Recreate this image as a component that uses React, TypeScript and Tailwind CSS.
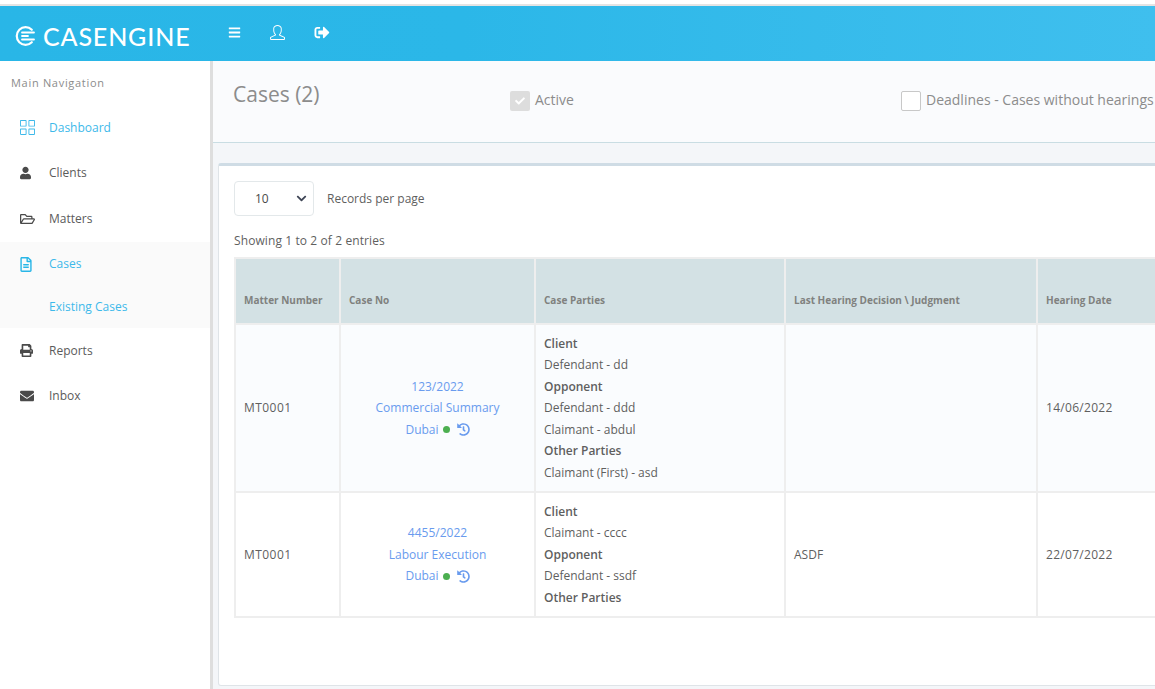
import { FaBars, FaCheck, FaChevronDown, FaEnvelope, FaHistory, FaPrint, FaRegFileAlt, FaRegFolderOpen, FaSignOutAlt, FaUser } from "react-icons/fa";
import { SlGrid, SlUser } from "react-icons/sl";
import type { ReactNode } from "react";

const nav = [
  { label: "Dashboard", icon: <SlGrid className="h-[15px] w-[15px]" />, active: true },
  { label: "Clients", icon: <FaUser className="h-[14px] w-[11px] text-[#4a4a4a]" /> },
  { label: "Matters", icon: <FaRegFolderOpen className="h-[14px] w-[15px] text-[#4a4a4a]" /> },
];

const filas = [
  {
    matter: "MT0001",
    caso: ["123/2022", "Commercial Summary"],
    partes: [
      ["Client", "Defendant - dd"],
      ["Opponent", "Defendant - ddd", "Claimant - abdul"],
      ["Other Parties", "Claimant (First) - asd"],
    ],
    decision: "",
    fecha: "14/06/2022",
    alto: "h-[168px] bg-[#fafcfe]",
  },
  {
    matter: "MT0001",
    caso: ["4455/2022", "Labour Execution"],
    partes: [
      ["Client", "Claimant - cccc"],
      ["Opponent", "Defendant - ssdf"],
      ["Other Parties"],
    ],
    decision: "ASDF",
    fecha: "22/07/2022",
    alto: "h-[125px] bg-white",
  },
];

function NavItem({ icon, label, active }: { icon: ReactNode; label: string; active?: boolean }) {
  return (
    <div className={`flex h-[45.5px] items-center pl-5 ${active ? "text-[#3db9ea]" : "text-[#5b5b5b]"}`}>
      <span className="flex w-[29px] items-center">{icon}</span>
      <span className="text-[12px]">{label}</span>
    </div>
  );
}

function Th({ children }: { children: ReactNode }) {
  return (
    <th className="border-2 border-[#eeeeee] bg-[#d3e1e4] px-2 pt-[18px] text-left align-middle text-[10px] font-bold text-[#80817f]">
      {children}
    </th>
  );
}

export default function App() {
  return (
    <div className="relative h-[689px] w-[1155px] overflow-hidden bg-white font-['Open_Sans',sans-serif] text-[12px] text-[#5f5f5f]">
      <div className="h-[6px] border-b-2 border-[#e4e4e4] bg-white" />
      <header className="flex h-[55px] items-center bg-gradient-to-r from-[#29b6e7] via-[#2bb7e8] via-40% to-[#3fbfee] text-white">
        <div className="flex w-[210px] items-center pt-[5px] pl-[15px]">
          <svg viewBox="0 0 20 20" className="h-[20px] w-[20px]" fill="none" stroke="white" strokeWidth="2.2" strokeLinecap="round">
            <path d="M16.8 3.8A8.8 8.8 0 1 0 16.8 16.2" />
            <path d="M7 6.5H19M7 10H13M7 13.5H19" strokeWidth="1.8" />
          </svg>
          <span className="ml-[8px] font-['Lato',sans-serif] text-[25px] leading-none font-medium tracking-[0.85px]">CASENGINE</span>
        </div>
        <div className="-mt-[3px] ml-[18px] flex items-center">
          <FaBars className="h-[13px] w-[13px]" />
          <SlUser className="ml-[29px] h-[15px] w-[15px]" />
          <FaSignOutAlt className="ml-[29px] h-[15px] w-[16px]" />
        </div>
      </header>

      <div className="flex h-[628px]">
        <aside className="w-[213px] shrink-0 border-r-[3px] border-[#dedede] bg-white">
          <p className="pt-[14px] pl-[11px] text-[11px] leading-[15px] tracking-[0.7px] text-[#8c8c8c]">Main Navigation</p>
          <div className="mt-[15px]">
            {nav.map((n) => (
              <NavItem key={n.label} {...n} />
            ))}
            <div className="h-[86.5px] bg-[#fafafa]">
              <NavItem label="Cases" active icon={<FaRegFileAlt className="h-[15px] w-[12px] text-[#29b6e7]" />} />
              <p className="pt-[11px] pl-[49px] text-[12px] text-[#3db9ea]">Existing Cases</p>
            </div>
            <NavItem label="Reports" icon={<FaPrint className="h-[13px] w-[13px] text-[#4a4a4a]" />} />
            <NavItem label="Inbox" icon={<FaEnvelope className="h-[14px] w-[14px] text-[#4a4a4a]" />} />
          </div>
        </aside>

        <main className="min-w-0 flex-1 bg-[#f4f6f9]">
          <div className="flex h-[82px] w-[942px] items-start border-b border-[#c9dde3] bg-[#fafbfd]">
            <h1 className="mt-[18px] ml-5 w-[277px] text-[21px] leading-[30px] font-normal text-[#8c8c8c]">Cases (2)</h1>
            <label className="mt-[30px] flex w-[391px] items-center text-[14px] text-[#8c8c8c]">
              <span className="mr-[5px] flex h-5 w-5 items-center justify-center rounded-[2px] bg-[#dddddd]">
                <FaCheck className="h-[10px] w-[10px] text-white" />
              </span>
              <span className="-mt-[3px]">Active</span>
            </label>
            <label className="mt-[30px] flex items-center text-[14px] whitespace-nowrap text-[#8c8c8c]">
              <span className="mr-[5px] h-5 w-5 shrink-0 rounded-[2px] border border-[#c8c8c8] bg-white" />
              <span className="-mt-[3px]">Deadlines - Cases without hearings</span>
            </label>
          </div>

          <section className="mt-[20px] ml-[5px] h-[523px] w-[960px] rounded-[3px] border border-[#dfe4e8] border-t-[3px] border-t-[#cfdce5] bg-white pt-[15px] pl-[15px]">
            <div className="flex items-center">
              <div className="flex h-[35px] w-[80px] items-center justify-between rounded-[4px] border border-[#e3e8ea] pr-[6px] pl-[20px] text-[#4a4a4a]">
                10
                <FaChevronDown className="h-[11px] w-[11px] text-[#3e4555]" />
              </div>
              <span className="ml-[13px]">Records per page</span>
            </div>
            <p className="mt-[16px] leading-[18px] tracking-[0.1px]">Showing 1 to 2 of 2 entries</p>
            <table className="mt-[7px] w-[1000px] table-fixed border-collapse">
              <colgroup>
                <col className="w-[105px]" />
                <col className="w-[195px]" />
                <col className="w-[250px]" />
                <col className="w-[252px]" />
                <col className="w-[198px]" />
              </colgroup>
              <thead>
                <tr className="h-[66px]">
                  <Th>Matter Number</Th>
                  <Th>Case No</Th>
                  <Th>Case Parties</Th>
                  <Th>Last Hearing Decision \ Judgment</Th>
                  <Th>Hearing Date</Th>
                </tr>
              </thead>
              <tbody>
                {filas.map((f) => (
                  <tr key={f.caso[0]} className={f.alto}>
                    <td className="border-2 border-[#eeeeee] px-2 tracking-[0.45px]">{f.matter}</td>
                    <td className="border-2 border-[#eeeeee] px-2 text-center leading-[21.5px] text-[#699bee]">
                      {f.caso.map((c) => (
                        <div key={c}>{c}</div>
                      ))}
                      <div className="flex items-center justify-center">
                        Dubai
                        <span className="mx-[4px] h-[7px] w-[7px] rounded-full bg-[#4caf50]" />
                        <FaHistory className="ml-[3px] h-[13px] w-[13px]" />
                      </div>
                    </td>
                    <td className="border-2 border-[#eeeeee] px-2 leading-[21.4px]">
                      {f.partes.map((p) => (
                        <div key={p[0]}>
                          <div className="font-semibold">{p[0]}</div>
                          {p.slice(1).map((t) => (
                            <div key={t}>{t}</div>
                          ))}
                        </div>
                      ))}
                    </td>
                    <td className="border-2 border-[#eeeeee] px-2">{f.decision}</td>
                    <td className="border-2 border-[#eeeeee] px-2 tracking-[0.3px]">{f.fecha}</td>
                  </tr>
                ))}
              </tbody>
            </table>
          </section>
        </main>
      </div>
    </div>
  );
}
